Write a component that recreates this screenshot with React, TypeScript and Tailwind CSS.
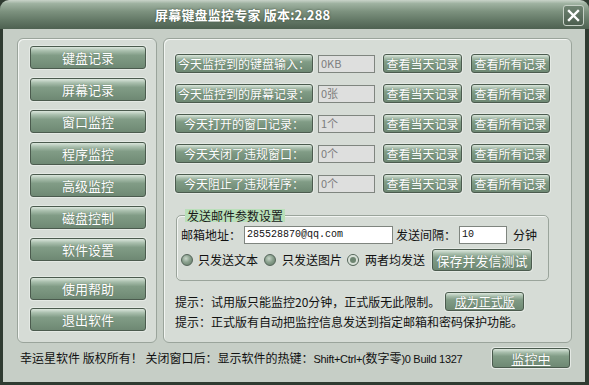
import React from 'react';

const FONT = "font-['Noto_Sans_CJK_SC','Liberation_Sans',sans-serif]";

function GBtn({ children, className = '', textClass = 'text-[12px]' }: { children: React.ReactNode; className?: string; textClass?: string }) {
  return (
    <div
      className={`flex items-center justify-center rounded-[3px] border border-[#4b5b4e] bg-[linear-gradient(to_bottom,#dbe6dc_0%,#a9bfad_18%,#819c86_40%,#76917b_75%,#6e8873_100%)] shadow-[0_0_0_1px_#e4e9e4] text-white leading-none whitespace-nowrap [text-shadow:0_0_1px_#5a6e5d] ${textClass} ${className}`}
    >
      {children}
    </div>
  );
}

function Radio({ checked }: { checked?: boolean }) {
  return (
    <div className="w-[12px] h-[12px] rounded-full border border-[#55655a] bg-[radial-gradient(circle_at_40%_35%,#c7d5c9_0%,#8aa18e_45%,#5f7763_100%)] flex items-center justify-center shrink-0">
      {checked && <div className="w-[6px] h-[6px] rounded-full bg-[#6d8571] ring-2 ring-[#d8e0d8]" />}
    </div>
  );
}

export default function App() {
  const left1 = ['键盘记录', '屏幕记录', '窗口监控', '程序监控', '高级监控', '磁盘控制', '软件设置'];
  const left2 = ['使用帮助', '退出软件'];
  const rows: [string, string][] = [
    ['今天监控到的键盘输入：', '0KB'],
    ['今天监控到的屏幕记录：', '0张'],
    ['今天打开的窗口记录：', '1个'],
    ['今天关闭了违规窗口：', '0个'],
    ['今天阻止了违规程序：', '0个'],
  ];

  return (
    <div className={`w-[589px] h-[385px] bg-[#2f3b31] ${FONT} overflow-hidden`}>
      <div className="w-full h-full flex flex-col rounded-t-[9px] overflow-hidden">
        {/* title bar */}
        <div className="h-[29px] shrink-0 relative flex items-center bg-[linear-gradient(to_bottom,#c9d3c9_0%,#9fb2a1_12%,#7c917e_40%,#5f7462_75%,#4e6151_100%)]">
          <div className="pl-[155px] text-white font-bold text-[13px] leading-none tracking-[0.2px] [text-shadow:0_0_2px_#3a4a3c]">
            屏幕键盘监控专家 版本:2.288
          </div>
          <div className="absolute left-[563px] top-[5px] w-[21px] h-[21px] rounded-[3px] border border-[#c6d0c6] bg-[linear-gradient(to_bottom,#6f8472,#4c5f4f)] flex items-center justify-center">
            <svg width="13" height="13" viewBox="0 0 13 13">
              <path d="M2 2 L11 11 M11 2 L2 11" stroke="white" strokeWidth="2.4" strokeLinecap="square" />
            </svg>
          </div>
        </div>
        {/* body */}
        <div className="flex-1 flex flex-col ml-[3px] mr-[4px] mb-[3px] bg-[#c6cec6] pt-[9px] pl-[14px] pr-[13px]">
          <div className="flex gap-[6px] h-[305px]">
            {/* left panel */}
            <div className="w-[140px] h-full rounded-[6px] border border-[#9aa49b] bg-[#d6dcd6] shadow-[inset_1px_1px_0_#f2f5f2] pt-[7px] pl-[12px]">
              <div className="flex flex-col gap-[9px]">
                {left1.map((t) => (
                  <GBtn key={t} className="w-[116px] h-[23px]" textClass="text-[13px]">{t}</GBtn>
                ))}
              </div>
              <div className="flex flex-col gap-[8px] mt-[16px]">
                {left2.map((t) => (
                  <GBtn key={t} className="w-[116px] h-[23px]" textClass="text-[13px]">{t}</GBtn>
                ))}
              </div>
            </div>
            {/* right panel */}
            <div className="w-[409px] h-full rounded-[6px] border border-[#9aa49b] bg-[#d6dcd6] shadow-[inset_1px_1px_0_#f2f5f2] pt-[15px] pl-[11px]">
              <div className="flex flex-col gap-[11px]">
                {rows.map(([label, val]) => (
                  <div key={label} className="flex items-center h-[19px]">
                    <GBtn className="w-[138px] h-[19px]" textClass="text-[12px]">{label}</GBtn>
                    <div className="ml-[5px] w-[57px] h-[18px] border border-[#7f857f] bg-[#dedfde] text-[#7d7d7d] text-[11px] leading-none flex items-center pl-[2px]">{val}</div>
                    <GBtn className="ml-[8px] w-[79px] h-[19px]" textClass="text-[12px]">查看当天记录</GBtn>
                    <GBtn className="ml-[9px] w-[79px] h-[19px]" textClass="text-[12px]">查看所有记录</GBtn>
                  </div>
                ))}
              </div>
              {/* group */}
              <fieldset className="mt-[16px] ml-[1px] w-[373px] h-[72px] rounded-[5px] border border-[#9aa49b] shadow-[inset_1px_1px_0_#f2f5f2] px-[4px] pb-[8px]">
                <legend className="ml-[4px] px-[2px] bg-[#b9dfb9] text-[#1a1a1a] text-[12px] leading-[13px]">发送邮件参数设置</legend>
                <div className="flex items-center h-[18px] mt-[4px] text-[12px] text-[#111] leading-none">
                  <span>邮箱地址：</span>
                  <div className="ml-[3px] w-[149px] h-[18px] border border-[#7f857f] bg-white flex items-center pl-[2px] font-['Liberation_Mono',monospace] text-[10px] text-[#111]">285528870@qq.com</div>
                  <span className="ml-[3px]">发送间隔：</span>
                  <div className="ml-[3px] w-[48px] h-[18px] border border-[#7f857f] bg-white flex items-center pl-[2px] font-['Liberation_Mono',monospace] text-[10px] text-[#111]">10</div>
                  <span className="ml-[6px]">分钟</span>
                </div>
                <div className="flex items-center h-[22px] mt-[5px] text-[12px] text-[#111] leading-none">
                  <Radio />
                  <span className="ml-[5px]">只发送文本</span>
                  <div className="ml-[6px]"><Radio /></div>
                  <span className="ml-[6px]">只发送图片</span>
                  <div className="ml-[5px]"><Radio checked /></div>
                  <span className="ml-[6px]">两者均发送</span>
                  <GBtn className="ml-[7px] w-[100px] h-[22px]" textClass="text-[13px]">保存并发信测试</GBtn>
                </div>
              </fieldset>
              <div className="flex items-center h-[19px] mt-[11px] text-[12px] text-[#111] leading-none">
                <span>提示：试用版只能监控20分钟，正式版无此限制。</span>
                <GBtn className="ml-[5px] w-[79px] h-[19px]" textClass="text-[12px] underline">成为正式版</GBtn>
              </div>
              <div className="flex items-center h-[20px] mt-[1px] text-[12px] text-[#111] leading-none">
                提示：正式版有自动把监控信息发送到指定邮箱和密码保护功能。
              </div>
            </div>
          </div>
          {/* status row */}
          <div className="flex items-center mt-[5px] h-[20px] pl-[3px]">
            <div className="text-[12px] text-[#111] leading-none whitespace-nowrap">
              幸运星软件 版权所有！ 关闭窗口后：显示软件的热键：<span className="font-['Liberation_Sans',sans-serif] text-[11px] tracking-[-0.3px]">Shift+Ctrl+(</span>数字零<span className="font-['Liberation_Sans',sans-serif] text-[11px] tracking-[-0.3px]">)0 Build 1327</span>
            </div>
            <GBtn className="ml-auto mr-[2px] w-[78px] h-[20px]" textClass="text-[13px] underline">监控中</GBtn>
          </div>
        </div>
      </div>
    </div>
  );
}
